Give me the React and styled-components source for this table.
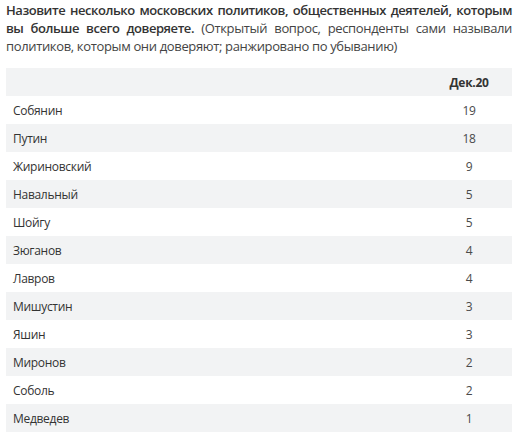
import React from "react";
import styled, { createGlobalStyle } from "styled-components";

const Global = createGlobalStyle`
  html, body { margin: 0; padding: 0; background: #fff; }
  body { font-family: "Open Sans", "Noto Sans", sans-serif; }
`;

const Page = styled.div`
  width: 506px;
  padding: 1px 15px 0 6px;
`;

const Question = styled.p`
  margin: 0 0 13px 0;
  font-size: 13px;
  line-height: 18px;
  color: #444;
  text-align: justify;
  letter-spacing: -0.35px;
`;

const Strong = styled.b`
  font-weight: 600;
  color: #333;
  letter-spacing: -0.45px;
`;

const Table = styled.div`
  display: grid;
  grid-template-columns: 1fr 86px;
`;

const Row = styled.div`
  display: contents;
`;

const Cell = styled.div`
  height: 28px;
  display: flex;
  align-items: center;
  justify-content: ${(p) => (p.$num ? "center" : "flex-start")};
  padding: 0 ${(p) => (p.$num ? "0" : "7px")};
  background: ${(p) => (p.$shaded ? "#f2f3f4" : "#fff")};
  font-size: 12px;
  color: ${(p) => (p.$head ? "#333" : p.$num ? "#4a4a4a" : "#333")};
  font-weight: ${(p) => (p.$head ? 700 : 400)};
  letter-spacing: -0.3px;
`;

const data = [
  ["Собянин", 19],
  ["Путин", 18],
  ["Жириновский", 9],
  ["Навальный", 5],
  ["Шойгу", 5],
  ["Зюганов", 4],
  ["Лавров", 4],
  ["Мишустин", 3],
  ["Яшин", 3],
  ["Миронов", 2],
  ["Соболь", 2],
  ["Медведев", 1],
];

export default function App() {
  return (
    <>
      <Global />
      <Page>
        <Question>
          <Strong>
            Назовите несколько московских политиков, общественных деятелей, которым вы больше всего доверяете.
          </Strong>{" "}
          (Открытый вопрос, респонденты сами называли политиков, которым они доверяют; ранжировано по убыванию)
        </Question>
        <Table>
          <Row>
            <Cell $shaded $head />
            <Cell $shaded $head $num>Дек.20</Cell>
          </Row>
          {data.map(([name, v], i) => (
            <Row key={name}>
              <Cell $shaded={i % 2 === 1}>{name}</Cell>
              <Cell $shaded={i % 2 === 1} $num>{v}</Cell>
            </Row>
          ))}
        </Table>
      </Page>
    </>
  );
}
